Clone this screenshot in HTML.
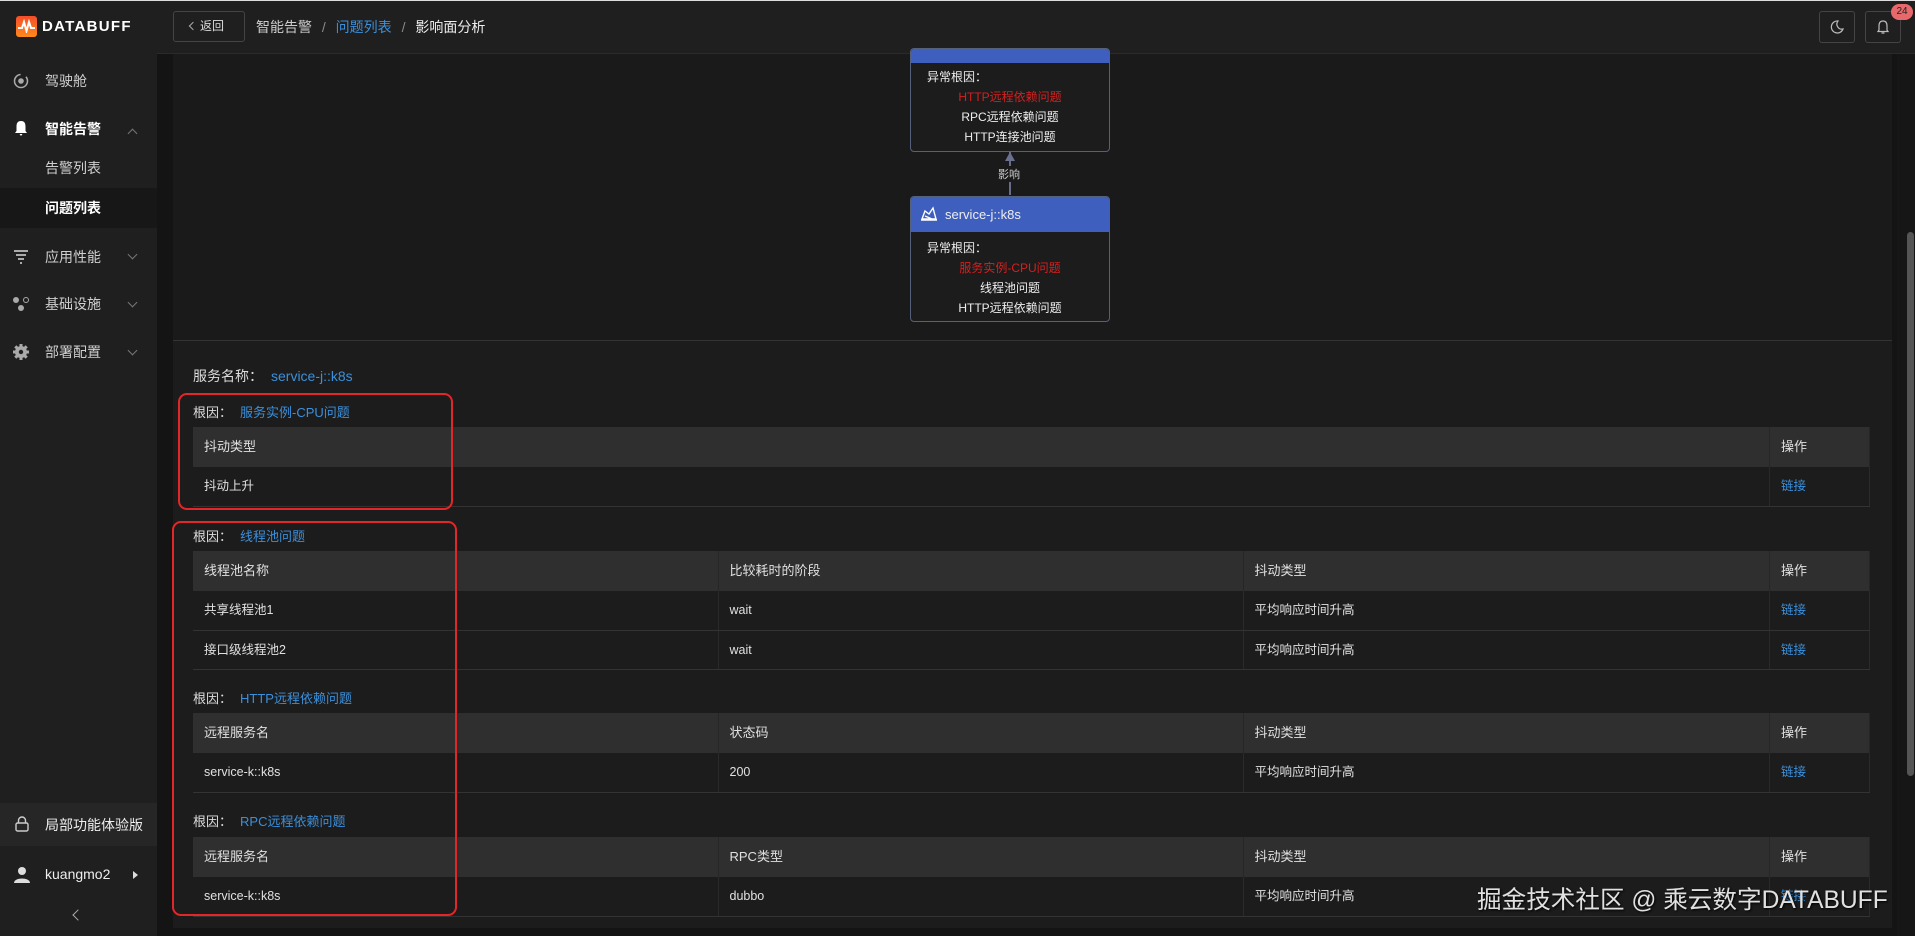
<!DOCTYPE html>
<html><head><meta charset="utf-8"><style>
*{margin:0;padding:0;box-sizing:border-box}
body{width:1915px;height:936px;overflow:hidden;background:#141414;font-family:"Liberation Sans","Noto Sans CJK SC",sans-serif;color:#e6e6e6;position:relative}
.a{position:absolute}
.side{left:0;top:0;width:157px;height:936px;background:#1f1f1f}
.hdr{left:157px;top:0;width:1758px;height:54px;background:#1f1f1f;border-bottom:1px solid #2a2a2a}
.mi{position:absolute;left:45px;font-size:14px;color:#cfcfcf;line-height:20px}
.ic{position:absolute;left:12px;width:18px;height:18px}
.chev{position:absolute;left:129px;width:7px;height:7px;border-right:1.3px solid #777;border-bottom:1.3px solid #777;transform:rotate(45deg)}
.panel{left:173px;top:54px;width:1719px;height:874px;background:#1c1c1c}
.node{position:absolute;width:200px;border:1px solid #55607a;border-radius:4px;background:#1c1c1c;font-size:12px;text-align:center;color:#eee}
.node .t{text-align:left;padding-left:16px}
.red{color:#d42020}
.lbl{position:absolute;left:193px;font-size:13px;color:#ddd}
.lbl span{color:#3b8fdb;margin-left:8px}
table{position:absolute;left:193px;width:1677px;border-collapse:collapse;font-size:12.5px;color:#e0e0e0}
th{background:#2f2f2f;text-align:left;font-weight:normal;height:40px;padding-left:11px;border-right:1px solid #262626;font-size:13px;vertical-align:middle;line-height:16px}
td{height:39px;padding-left:11px;border-bottom:1px solid #333;border-right:1px solid #2a2a2a;vertical-align:middle;line-height:16px}
td.l{color:#3b8fdb}
.rb{position:absolute;border:2.5px solid #e0282a;border-radius:9px}
</style></head><body>
<div class="a" style="left:0;top:0;width:1915px;height:1px;background:#ddd;z-index:5"></div>
<div class="a side">
  <div class="a" style="left:16px;top:16px;width:21px;height:21px;border-radius:3px;background:linear-gradient(#f54e2a,#ff8a1a)"></div>
  <svg class="a" style="left:17px;top:19px" width="19" height="14" viewBox="0 0 19 14"><path d="M1 9 L5 9 L7 3 L9.5 12 L12 3 L14 9 L18 9" stroke="#fff" stroke-width="2" fill="none"/></svg>
  <div class="a" style="left:42px;top:18px;font-size:15px;font-weight:bold;letter-spacing:1.3px;color:#fff">DATABUFF</div>
  <svg class="ic" style="top:72px" viewBox="0 0 18 18"><circle cx="9" cy="9" r="6.5" stroke="#aaa" stroke-width="1.5" fill="none" stroke-dasharray="30 6"/><circle cx="9" cy="9" r="2.8" fill="#aaa"/></svg>
  <div class="mi" style="top:71px">驾驶舱</div>
  <svg class="ic" style="top:119px" viewBox="0 0 18 18"><path d="M9 2 C5 2 4.5 5 4.5 8 L4.5 12 L3 14 L15 14 L13.5 12 L13.5 8 C13.5 5 13 2 9 2Z M7.5 15 L10.5 15 L9 17Z" fill="#fff"/></svg>
  <div class="mi" style="top:119px;color:#fff;font-weight:bold">智能告警</div>
  <div class="chev" style="top:130px;transform:rotate(225deg)"></div>
  <div class="mi" style="top:158px">告警列表</div>
  <div class="a" style="left:0;top:188px;width:157px;height:40px;background:#171717"></div>
  <div class="mi" style="top:198px;color:#fff;font-weight:bold">问题列表</div>
  <svg class="ic" style="top:248px" viewBox="0 0 18 18"><path d="M2 3H16M4 7H14M6 11H12M8 15H10" stroke="#aaa" stroke-width="2"/></svg>
  <div class="mi" style="top:247px">应用性能</div><div class="chev" style="top:251px"></div>
  <svg class="ic" style="top:295px" viewBox="0 0 18 18"><circle cx="4" cy="5" r="3" fill="#aaa"/><circle cx="14" cy="5" r="2.5" stroke="#aaa" fill="none"/><circle cx="9" cy="13" r="3" fill="#aaa"/></svg>
  <div class="mi" style="top:294px">基础设施</div><div class="chev" style="top:299px"></div>
  <svg class="ic" style="top:343px" viewBox="0 0 18 18"><circle cx="9" cy="9" r="6" fill="#aaa"/><path d="M9 1V17M1 9H17M3.3 3.3L14.7 14.7M14.7 3.3L3.3 14.7" stroke="#aaa" stroke-width="3"/><circle cx="9" cy="9" r="2.2" fill="#1f1f1f"/></svg>
  <div class="mi" style="top:342px">部署配置</div><div class="chev" style="top:347px"></div>
  <div class="a" style="left:0;top:803px;width:157px;height:43px;background:#262626"></div>
  <svg class="ic" style="top:815px;left:13px" viewBox="0 0 18 18"><rect x="3" y="8" width="12" height="8" rx="1.5" stroke="#ccc" stroke-width="1.4" fill="none"/><path d="M5.5 8V5.5A3.5 3.5 0 0 1 12.5 5.5V8" stroke="#ccc" stroke-width="1.4" fill="none"/></svg>
  <div class="mi" style="top:815px;color:#eee">局部功能体验版</div>
  <svg class="ic" style="top:866px;left:13px" viewBox="0 0 18 18"><circle cx="9" cy="5" r="4" fill="#ddd"/><path d="M1 17C1 11 17 11 17 17Z" fill="#ddd"/></svg>
  <div class="mi" style="top:864px;color:#eee">kuangmo2</div>
  <div class="a" style="left:133px;top:871px;border-left:5px solid #ddd;border-top:4.5px solid transparent;border-bottom:4.5px solid transparent"></div>
  <div class="a" style="left:74px;top:911px;width:8px;height:8px;border-left:1.5px solid #aaa;border-bottom:1.5px solid #aaa;transform:rotate(45deg)"></div>
</div>
<div class="a hdr">
  <div class="a" style="left:16px;top:11px;width:72px;height:31px;border:1px solid #444;border-radius:3px;font-size:12px;color:#ddd;line-height:29px;padding-left:26px">返回</div>
  <div class="a" style="left:33px;top:23px;width:6px;height:6px;border-left:1.2px solid #aaa;border-bottom:1.2px solid #aaa;transform:rotate(45deg)"></div>
  <div class="a" style="left:99px;top:17px;font-size:14px;color:#ccc">智能告警 <span style="color:#888;margin:0 6px">/</span> <span style="color:#3b8fdb">问题列表</span> <span style="color:#888;margin:0 6px">/</span> <span style="color:#eee">影响面分析</span></div>
  <div class="a" style="left:1662px;top:11px;width:36px;height:32px;border:1px solid #444;border-radius:3px"></div>
  <svg class="a" style="left:1672px;top:19px" width="16" height="16" viewBox="0 0 16 16"><path d="M9 2A6 6 0 1 0 14 10A5 5 0 0 1 9 2Z" stroke="#bbb" stroke-width="1.2" fill="none"/></svg>
  <div class="a" style="left:1708px;top:11px;width:36px;height:32px;border:1px solid #444;border-radius:3px"></div>
  <svg class="a" style="left:1718px;top:19px" width="16" height="16" viewBox="0 0 16 16"><path d="M8 2C5 2 4 4 4 7V11L3 12.5H13L12 11V7C12 4 11 2 8 2ZM6.5 14H9.5" stroke="#bbb" stroke-width="1.2" fill="none"/></svg>
  <div class="a" style="left:1734px;top:4px;width:22px;height:16px;border-radius:8px;background:#e8696b;font-size:10px;color:#222;text-align:center;line-height:16px">24</div>
</div>
<div class="a panel">
  <div class="a" style="left:0;top:286px;width:1719px;height:1px;background:#2c2c2c"></div>
</div>
<div class="a" style="left:173px;top:54px;width:1719px;height:287px;background:#1a1a1a;border-bottom:1px solid #333"></div>
<div class="node" style="left:910px;top:48px;height:104px">
  <div style="height:14px;background:#3e5fbe;border-radius:3px 3px 0 0"></div>
  <div class="t" style="margin-top:4px;line-height:20px">异常根因：</div>
  <div class="red" style="line-height:20px">HTTP远程依赖问题</div>
  <div style="line-height:20px">RPC远程依赖问题</div>
  <div style="line-height:20px">HTTP连接池问题</div>
</div>
<div class="a" style="left:1009px;top:152px;width:1.5px;height:43px;background:#666c8a"></div>
<div class="a" style="left:1005px;top:152px;border-bottom:9px solid #6a7090;border-left:5px solid transparent;border-right:5px solid transparent"></div>
<div class="a" style="left:998px;top:166px;font-size:11px;color:#ccc;background:#1a1a1a">影响</div>
<div class="node" style="left:910px;top:196px;height:126px">
  <div style="height:35px;background:#3e5fbe;border-radius:3px 3px 0 0;text-align:left;padding-left:34px;line-height:35px;font-size:13px">service-j::k8s</div>
  <svg class="a" style="left:9px;top:9px" width="18" height="16" viewBox="0 0 18 16"><path d="M2 13L5 5L9 8L13 2L16 13Z M1 14L17 14M5 10L12 13" stroke="#fff" stroke-width="1.4" fill="none"/></svg>
  <div class="t" style="margin-top:6px;line-height:20px">异常根因：</div>
  <div class="red" style="line-height:20px">服务实例-CPU问题</div>
  <div style="line-height:20px">线程池问题</div>
  <div style="line-height:20px">HTTP远程依赖问题</div>
</div>

<div class="lbl" style="top:366px;font-size:14px">服务名称：<span>service-j::k8s</span></div>
<div class="lbl" style="top:402px">根因：<span>服务实例-CPU问题</span></div>
<table style="top:427px"><tr><th>抖动类型</th><th style="width:100px">操作</th></tr><tr><td>抖动上升</td><td class="l">链接</td></tr></table>

<div class="lbl" style="top:526px">根因：<span>线程池问题</span></div>
<table style="top:551px"><tr><th style="width:525px">线程池名称</th><th style="width:525px">比较耗时的阶段</th><th>抖动类型</th><th style="width:100px">操作</th></tr>
<tr><td>共享线程池1</td><td>wait</td><td>平均响应时间升高</td><td class="l">链接</td></tr>
<tr><td>接口级线程池2</td><td>wait</td><td>平均响应时间升高</td><td class="l">链接</td></tr></table>

<div class="lbl" style="top:688px">根因：<span>HTTP远程依赖问题</span></div>
<table style="top:713px"><tr><th style="width:525px">远程服务名</th><th style="width:525px">状态码</th><th>抖动类型</th><th style="width:100px">操作</th></tr>
<tr><td>service-k::k8s</td><td>200</td><td>平均响应时间升高</td><td class="l">链接</td></tr></table>

<div class="lbl" style="top:811px">根因：<span>RPC远程依赖问题</span></div>
<table style="top:837px"><tr><th style="width:525px">远程服务名</th><th style="width:525px">RPC类型</th><th>抖动类型</th><th style="width:100px">操作</th></tr>
<tr><td>service-k::k8s</td><td>dubbo</td><td>平均响应时间升高</td><td class="l">链接</td></tr></table>

<div class="rb" style="left:178px;top:393px;width:275px;height:117px"></div>
<div class="rb" style="left:172px;top:521px;width:285px;height:395px"></div>

<div class="a" style="left:1897px;top:54px;width:18px;height:882px;background:#161616"></div>
<div class="a" style="left:1907px;top:232px;width:7px;height:544px;background:#555;border-radius:4px"></div>
<div class="a" style="left:1477px;top:880px;font-size:24.6px;color:#e0e0e0;text-shadow:1px 1px 2px #000;white-space:nowrap">掘金技术社区 @ 乘云数字DATABUFF</div>
</body></html>
